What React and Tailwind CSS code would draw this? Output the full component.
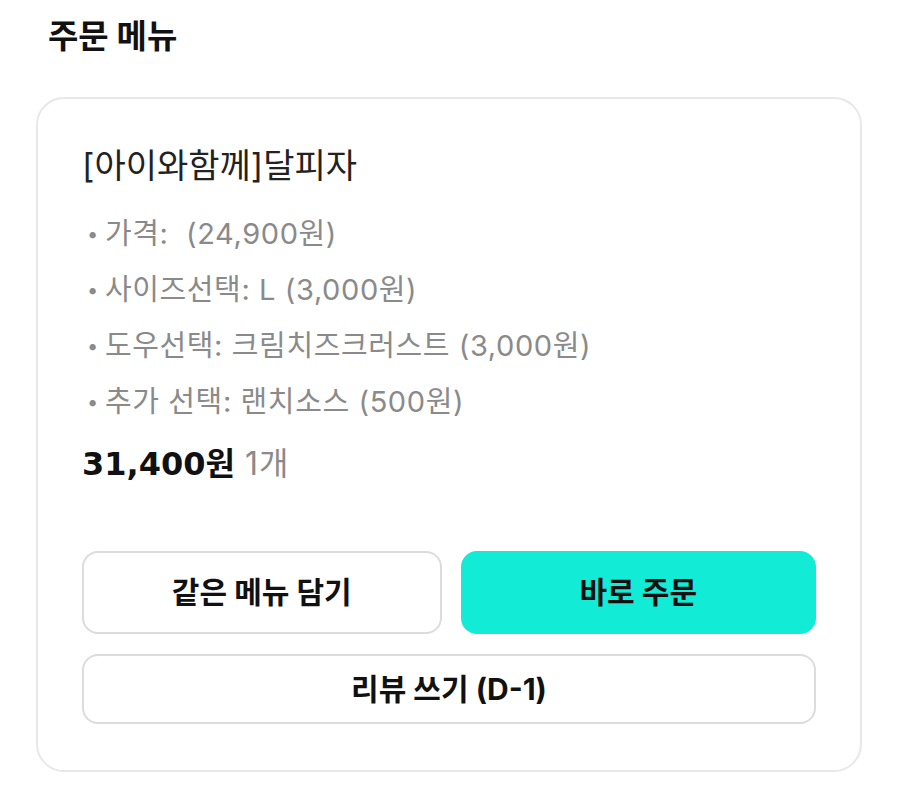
const FONT = { fontFamily: 'Inter, "Noto Sans CJK KR", sans-serif' };
const PRICE_FONT = { fontFamily: '"DejaVu Sans", "Noto Sans CJK KR", sans-serif' };

const OPTIONS = [
  '가격:  (24,900원)',
  '사이즈선택: L (3,000원)',
  '도우선택: 크림치즈크러스트 (3,000원)',
  '추가 선택: 랜치소스 (500원)',
];

export default function App() {
  return (
    <div className="w-[899px] h-[792px] bg-white" style={FONT}>
      <div className="px-[36px] pt-[14px]">
        <h2 className="pl-[12px] text-[33px] leading-[44px] font-bold text-[#111]">주문 메뉴</h2>

        <div className="mt-[39px] w-[826px] rounded-[28px] border-2 border-[#e8e8e8] pl-[44px] pr-[44px] pt-[49px] pb-[46px]">
          <p className="text-[34px] leading-[36px] text-[#222]">[아이와함께]달피자</p>

          <ul className="mt-[22px]">
            {OPTIONS.map((opt) => (
              <li key={opt} className="flex items-center h-[56px] text-[29px] text-[#8a8a8a] tracking-[0.6px]">
                <span className="w-[23px] pl-[5px] text-[20px]">•</span>
                <span className="whitespace-pre">{opt}</span>
              </li>
            ))}
          </ul>

          <div className="mt-[14px] h-[40px] flex items-center gap-[10px]">
            <span className="text-[32px] font-bold text-[#111]" style={PRICE_FONT}>31,400원</span>
            <span className="text-[32px] text-[#8a8a8a] tracking-[1px]">1개</span>
          </div>

          <div className="mt-[67px] flex gap-[19px]">
            <button className="flex-1 h-[83px] rounded-[16px] border-2 border-[#dcdcdc] bg-white text-[30px] font-bold text-[#111]">
              같은 메뉴 담기
            </button>
            <button className="flex-1 h-[83px] rounded-[16px] bg-[#12ebd6] text-[30px] font-bold text-[#111]">
              바로 주문
            </button>
          </div>

          <button className="mt-[20px] w-full h-[70px] rounded-[16px] border-2 border-[#dcdcdc] bg-white text-[30px] font-bold text-[#111]">
            리뷰 쓰기 (D-1)
          </button>
        </div>
      </div>
    </div>
  );
}
